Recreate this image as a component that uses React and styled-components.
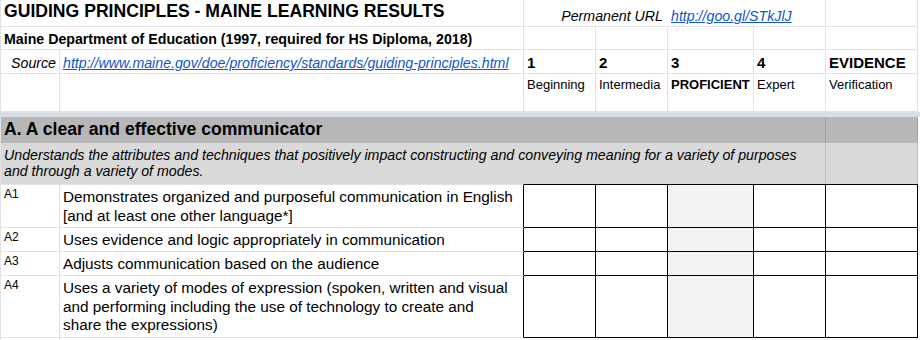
import React from "react";
import styled, { createGlobalStyle } from "styled-components";

const COLS = "59px 464px 72px 72px 86px 72px 92px";
const GRID = "rgba(0, 0, 0, 0.115)";

const GlobalStyle = createGlobalStyle`
  html, body {
    margin: 0;
    padding: 0;
    background: #fff;
  }
  body {
    font-family: "Liberation Sans", Arial, Helvetica, sans-serif;
    color: #000;
    overflow: hidden;
  }
`;

const Page = styled.div`
  width: 920px;
  height: 340px;
  overflow: hidden;
`;

const Pane = styled.div`
  width: 918px;
  box-sizing: border-box;
  border-left: 1px solid ${GRID};
`;

const FreezeBar = styled.div`
  height: 5px;
  background: #d9dde6;
`;

const Row = styled.div`
  display: grid;
  grid-template-columns: ${COLS};
  height: ${(p) => p.$h}px;
`;

const Cell = styled.div`
  grid-column: span ${(p) => p.$span || 1};
  box-sizing: border-box;
  display: flex;
  align-items: ${(p) => (p.$top ? "flex-start" : "flex-end")};
  justify-content: ${(p) => (p.$right ? "flex-end" : "flex-start")};
  padding: ${(p) => (p.$top ? "3px 3px 0" : "0 3px 2px")};
  border-right: 1px solid ${(p) => (p.$open ? "transparent" : GRID)};
  border-bottom: 1px solid ${GRID};
  white-space: nowrap;
  overflow: hidden;
`;

const Band = styled(Cell)`
  background: ${(p) => p.$bg};
  border-bottom: none;
  padding-bottom: ${(p) => p.$pb}px;
`;

const Title = styled.span`
  font-size: 17.6px;
  font-weight: bold;
  padding-bottom: 1px;
`;

const Subtitle = styled.span`
  font-size: 14.2px;
  font-weight: bold;
`;

const Note = styled.span`
  font-size: 14.2px;
  font-style: italic;
`;

const Link = styled.a`
  font-size: 14.2px;
  font-style: italic;
  color: #1155cc;
  text-decoration: underline;
`;

const Level = styled.span`
  font-size: 15px;
  font-weight: bold;
`;

const LevelName = styled.span`
  font-size: 13px;
  font-weight: ${(p) => (p.$strong ? "bold" : "normal")};
`;

const Summary = styled.span`
  font-size: 14.2px;
  font-style: italic;
  line-height: 16.7px;
  white-space: normal;
`;

const Items = styled.div``;

const Code = styled.div`
  box-sizing: border-box;
  padding: 0 3px;
  font-size: 12px;
  line-height: 18.5px;
  border-right: 1px solid ${GRID};
  border-bottom: 1px solid ${GRID};
  ${Items} > :first-child > & {
    border-top: 1px solid ${GRID};
  }
`;

const Statement = styled.div`
  box-sizing: border-box;
  padding: 3px 3px 0;
  font-size: 15.3px;
  line-height: 18.5px;
  white-space: nowrap;
  border-right: 1px solid #000;
  border-bottom: 1px solid ${GRID};
  ${Items} > :first-child > & {
    border-top: 1px solid ${GRID};
  }
`;

const Line = styled.div``;

const Mark = styled.div`
  box-sizing: border-box;
  background: ${(p) => (p.$proficient ? "#f3f3f3" : "#fff")};
  border-right: 1px solid #000;
  border-bottom: 1px solid #000;
  ${Items} > :first-child > & {
    border-top: 1px solid #000;
  }
`;

const Blank = styled.div`
  border-right: 1px solid ${GRID};
`;

const levels = [
  { num: "1", name: "Beginning" },
  { num: "2", name: "Intermedia" },
  { num: "3", name: "PROFICIENT", strong: true },
  { num: "4", name: "Expert" },
  { num: "EVIDENCE", name: "Verification" },
];

// lines are broken where the sheet wraps them
const items = [
  {
    code: "A1",
    lines: ["Demonstrates organized and purposeful communication in English", "[and at least one other language*]"],
    h: 44,
  },
  { code: "A2", lines: ["Uses evidence and logic appropriately in communication"], h: 24 },
  { code: "A3", lines: ["Adjusts communication based on the audience"], h: 24 },
  {
    code: "A4",
    lines: [
      "Uses a variety of modes of expression (spoken, written and visual",
      "and performing including the use of technology to create and",
      "share the expressions)",
    ],
    h: 62,
  },
];

const sourceUrl = "http://www.maine.gov/doe/proficiency/standards/guiding-principles.html";

export default function App() {
  return (
    <Page>
      <GlobalStyle />
      <Pane>
        <Row $h={27}>
          <Cell $span={2} style={{ paddingBottom: 3 }}>
            <Title>GUIDING PRINCIPLES - MAINE LEARNING RESULTS</Title>
          </Cell>
          <Cell $span={2} $open $right style={{ paddingRight: 4 }}>
            <Note>Permanent URL</Note>
          </Cell>
          <Cell $span={2}>
            <Link href="#">http://goo.gl/STkJlJ</Link>
          </Cell>
          <Cell />
        </Row>
        <Row $h={23}>
          <Cell $span={2}>
            <Subtitle>Maine Department of Education (1997, required for HS Diploma, 2018)</Subtitle>
          </Cell>
          {levels.map((l) => (
            <Cell key={l.num} />
          ))}
        </Row>
        <Row $h={24}>
          <Cell $right>
            <Note>Source</Note>
          </Cell>
          <Cell>
            <Link href="#">{sourceUrl}</Link>
          </Cell>
          {levels.map((l) => (
            <Cell key={l.num}>
              <Level>{l.num}</Level>
            </Cell>
          ))}
        </Row>
        <Row $h={38}>
          <Cell />
          <Cell />
          {levels.map((l) => (
            <Cell key={l.num} $top>
              <LevelName $strong={l.strong}>{l.name}</LevelName>
            </Cell>
          ))}
        </Row>
      </Pane>
      <FreezeBar />
      <Pane>
        <Row $h={26}>
          <Band $span={6} $bg="#b7b7b7" $pb={2}>
            <Title>A. A clear and effective communicator</Title>
          </Band>
          <Band $bg="#b7b7b7" />
        </Row>
        <Row $h={41}>
          <Band $span={6} $bg="#d9d9d9" $pb={4}>
            <Summary>
              Understands the attributes and techniques that positively impact constructing and
              conveying meaning for a variety of purposes and through a variety of modes.
            </Summary>
          </Band>
          <Band $bg="#d9d9d9" />
        </Row>
        <Items>
          {items.map((it) => (
            <Row key={it.code} $h={it.h}>
              <Code>{it.code}</Code>
              <Statement>
                {it.lines.map((line) => (
                  <Line key={line}>{line}</Line>
                ))}
              </Statement>
              {levels.map((l) => (
                <Mark key={l.num} $proficient={l.strong} />
              ))}
            </Row>
          ))}
        </Items>
        <Row $h={20}>
          <Blank />
          <Blank />
          {levels.map((l) => (
            <Blank key={l.num} />
          ))}
        </Row>
      </Pane>
    </Page>
  );
}
